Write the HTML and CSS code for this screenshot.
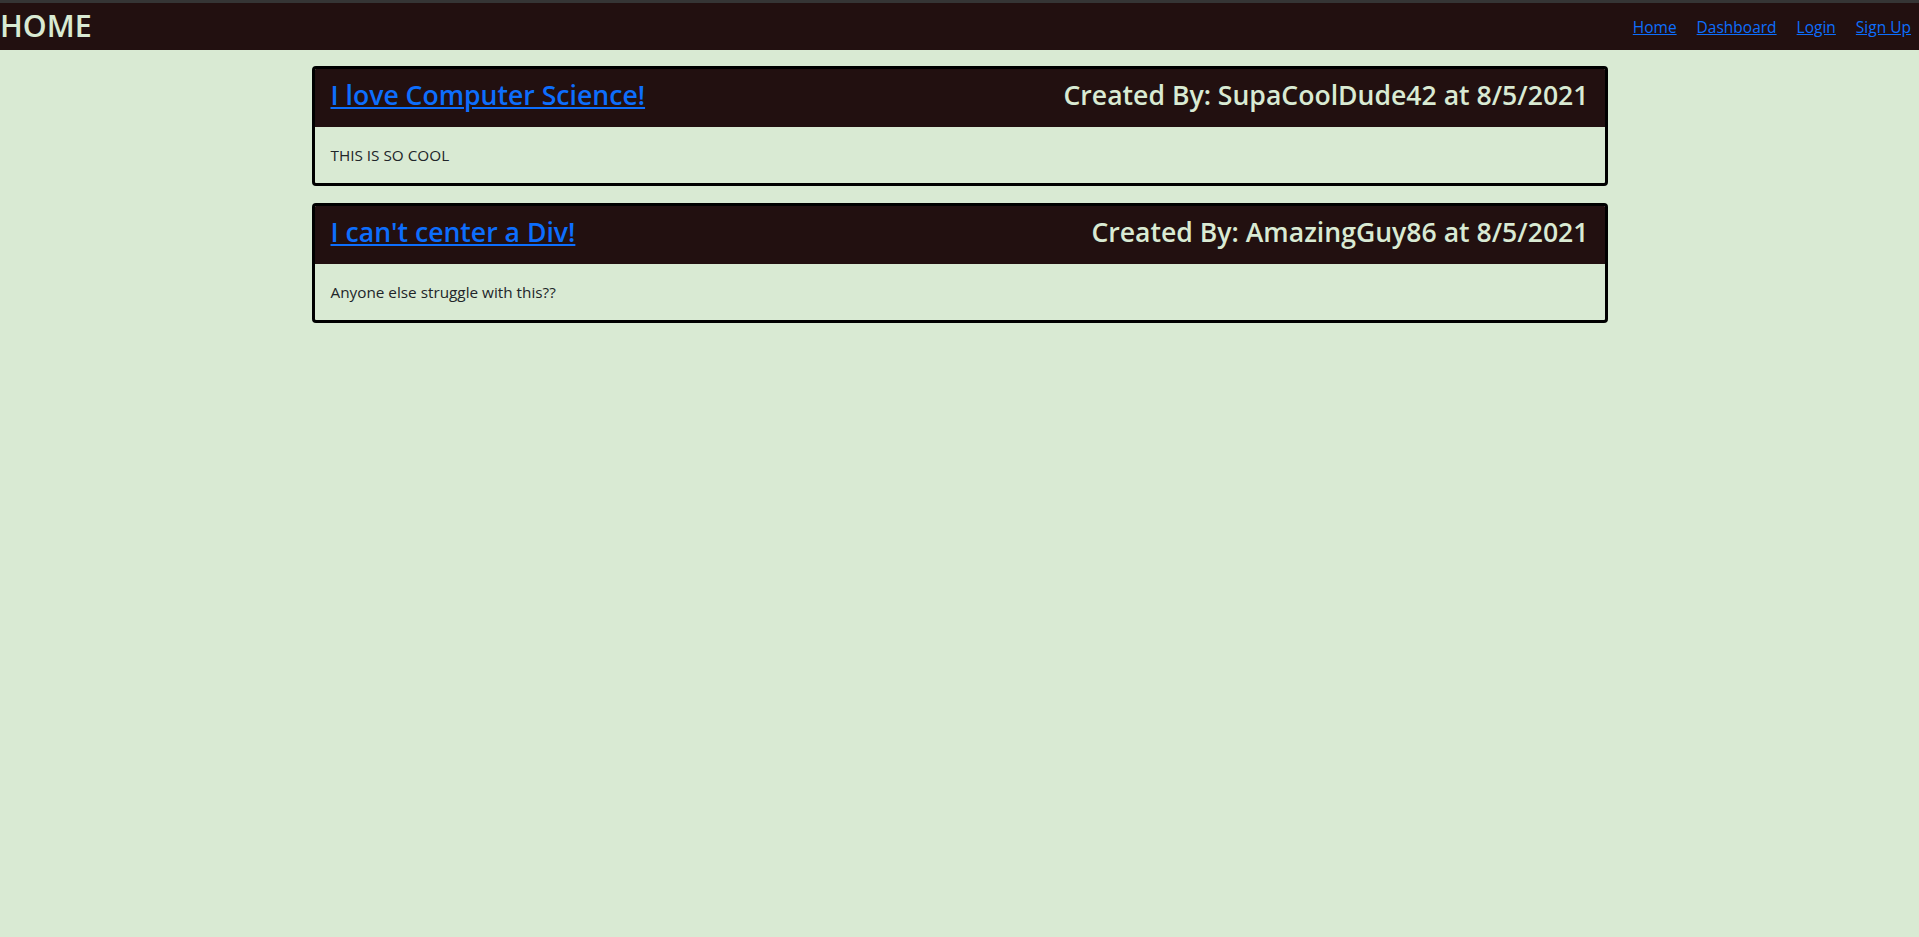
FILE: index.html
```html
<!DOCTYPE html>
<html lang="en">
<head>
<meta charset="utf-8">
<title>Home</title>
<link rel="stylesheet" href="styles.css">
</head>
<body>
<header class="topbar">
  <h1 class="brand">HOME</h1>
  <nav class="nav">
    <a href="#">Home</a>
    <a href="#">Dashboard</a>
    <a href="#">Login</a>
    <a href="#">Sign Up</a>
  </nav>
</header>
<main class="container">
  <article class="card">
    <div class="card-header">
      <h2 class="card-title"><a href="#">I love Computer Science!</a></h2>
      <h2 class="card-meta">Created By: SupaCoolDude42 at 8/5/2021</h2>
    </div>
    <div class="card-body">THIS IS SO COOL</div>
  </article>
  <article class="card">
    <div class="card-header">
      <h2 class="card-title"><a href="#">I can't center a Div!</a></h2>
      <h2 class="card-meta">Created By: AmazingGuy86 at 8/5/2021</h2>
    </div>
    <div class="card-body">Anyone else struggle with this??</div>
  </article>
</main>
</body>
</html>
```
FILE: styles.css
```css
html, body {
  margin: 0;
  padding: 0;
}
body {
  background: #d9ead3;
  font-family: "Open Sans", "Noto Sans", sans-serif;
  color: #212529;
  min-height: 937px;
}
.topbar {
  border-top: 3px solid #353535;
  background: #221010;
  height: 47px;
  display: flex;
  align-items: center;
  justify-content: space-between;
  padding-right: 8px;
}
.brand {
  margin: 0;
  font-size: 30.4px;
  font-weight: 600;
  color: #d9ead3;
  line-height: 1;
}
.nav {
  display: flex;
  gap: 20px;
  font-size: 15.5px;
}
.nav a {
  color: #0d6efd;
}
.container {
  width: 1296px;
  margin: 16px auto 0;
  display: flex;
  flex-direction: column;
  gap: 17px;
}
.card {
  border: 3px solid #000;
  border-radius: 4px;
  overflow: hidden;
}
.card-header {
  background: #221010;
  height: 58px;
  display: flex;
  align-items: center;
  justify-content: space-between;
  padding: 0 16px 4px;
  box-sizing: border-box;
}
.card-header h2 {
  margin: 0;
  font-size: 26.6px;
  font-weight: 600;
  line-height: 1.2;
}
.card-title a {
  color: #0d6efd;
}
.card-meta {
  color: #d9ead3;
}
.card-body {
  padding: 16px;
  font-size: 15.3px;
  line-height: 24px;
}
```
